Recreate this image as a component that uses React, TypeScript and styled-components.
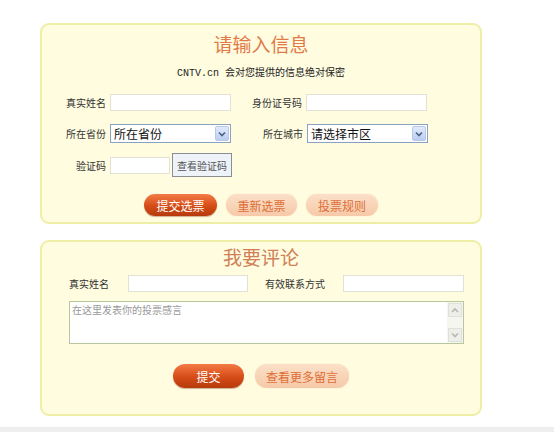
import React from 'react';
import styled, { createGlobalStyle } from 'styled-components';

const GlobalStyle = createGlobalStyle`
  body {
    margin: 0;
    background: #fff;
    font-family: "Liberation Sans", "Noto Sans CJK SC", sans-serif;
  }
`;

const Page = styled.div`
  width: 554px;
  height: 432px;
  overflow: hidden;
  padding-top: 23px;
  box-sizing: border-box;
  display: flex;
  flex-direction: column;
`;

const Panel = styled.div<{ $height: number; $padTop: number }>`
  margin-left: 40px;
  width: 442px;
  height: ${(p) => p.$height}px;
  flex-shrink: 0;
  box-sizing: border-box;
  padding-top: ${(p) => p.$padTop}px;
  border: 2px solid #eeeea6;
  border-radius: 9px;
  background: #fffce0;
  display: flex;
  flex-direction: column;
  & + & {
    margin-top: 16px;
  }
`;

const Title = styled.div<{ $color: string }>`
  text-align: center;
  font-size: 19px;
  line-height: 24px;
  color: ${(p) => p.$color};
  font-family: "Noto Sans CJK SC", sans-serif;
`;

const Note = styled.div`
  margin-top: 10px;
  text-align: center;
  font-size: 10px;
  line-height: 16px;
  color: #222;
  font-family: "Liberation Mono", "Noto Sans CJK SC", monospace;
`;

const FormRow = styled.div<{ $top: number }>`
  display: flex;
  align-items: center;
  margin-top: ${(p) => p.$top}px;
`;

const Label = styled.div<{ $width: number; $align?: string }>`
  width: ${(p) => p.$width}px;
  flex-shrink: 0;
  text-align: ${(p) => p.$align || 'right'};
  padding-right: 4px;
  box-sizing: border-box;
  font-size: 10px;
  color: #333;
  font-family: "Noto Sans CJK SC", sans-serif;
`;

const TextInput = styled.div<{ $width: number }>`
  width: ${(p) => p.$width}px;
  height: 17px;
  box-sizing: border-box;
  border: 1px solid #e2e2d4;
  background: #fff;
  flex-shrink: 0;
`;

const SelectBox = styled.div`
  width: 121px;
  height: 19px;
  box-sizing: border-box;
  border: 1px solid #8aa2c2;
  background: #fff;
  display: flex;
  align-items: center;
  justify-content: space-between;
  padding-left: 3px;
  font-size: 12px;
  color: #111;
  font-family: "Noto Sans CJK SC", sans-serif;
  flex-shrink: 0;
`;

const SelectArrow = styled.div`
  width: 14px;
  height: 15px;
  margin-right: 1px;
  border-radius: 2px;
  background: linear-gradient(#e2ebfb, #b9cdf1);
  border: 1px solid #b8c8e6;
  box-sizing: border-box;
  display: flex;
  align-items: center;
  justify-content: center;
`;

const Spacer = styled.div<{ $width: number }>`
  width: ${(p) => p.$width}px;
  flex-shrink: 0;
`;

const CodeButton = styled.div`
  width: 60px;
  height: 24px;
  margin-left: 2px;
  box-sizing: border-box;
  border: 1px solid #8a8f96;
  background: #eef3fa;
  font-size: 10px;
  color: #555;
  display: flex;
  align-items: center;
  justify-content: center;
  font-family: "Noto Sans CJK SC", sans-serif;
`;

const ButtonRow = styled.div<{ $top: number; $gap: number }>`
  display: flex;
  justify-content: center;
  gap: ${(p) => p.$gap}px;
  margin-top: ${(p) => p.$top}px;
`;

const PillButton = styled.div<{ $primary?: boolean; $width: number; $height: number }>`
  width: ${(p) => p.$width}px;
  height: ${(p) => p.$height}px;
  border-radius: ${(p) => p.$height / 2}px;
  display: flex;
  align-items: center;
  justify-content: center;
  font-size: 12px;
  font-family: "Noto Sans CJK SC", sans-serif;
  color: ${(p) => (p.$primary ? '#fff' : '#de6e38')};
  background: ${(p) =>
    p.$primary
      ? 'linear-gradient(#f47b45, #d54c17 55%, #b63a0c)'
      : 'linear-gradient(#fbe0c8, #f6c9a8)'};
  box-shadow: ${(p) =>
    p.$primary ? '0 1px 1px rgba(120,40,0,0.35)' : '0 0 1px rgba(220,150,110,0.6)'};
`;

const CommentArea = styled.div`
  margin: 9px 0 0 27px;
  width: 395px;
  height: 43px;
  box-sizing: border-box;
  border: 1px solid #b9c79c;
  background: #fff;
  display: flex;
`;

const Placeholder = styled.div`
  flex: 1;
  padding: 1px 2px;
  font-size: 10px;
  line-height: 13px;
  color: #999;
  font-family: "Noto Sans CJK SC", sans-serif;
`;

const ScrollBar = styled.div`
  width: 16px;
  background: #f6f6f0;
  display: flex;
  flex-direction: column;
  justify-content: space-between;
  align-items: center;
`;

const ScrollBtn = styled.div`
  width: 14px;
  height: 14px;
  margin: 1px 0;
  background: #eeeeea;
  border: 1px solid #e0e0da;
  box-sizing: border-box;
  display: flex;
  align-items: center;
  justify-content: center;
`;

const Footer = styled.div`
  margin-top: 11px;
  height: 10px;
  flex-shrink: 0;
  background: #eeeeee;
`;

const Chevron = ({ up, color }: { up?: boolean; color: string }) => (
  <svg width="8" height="6" viewBox="0 0 8 6">
    <path
      d={up ? 'M1 5 L4 2 L7 5' : 'M1 1.5 L4 4.5 L7 1.5'}
      fill="none"
      stroke={color}
      strokeWidth="1.6"
    />
  </svg>
);

function Select({ text }: { text: string }) {
  return (
    <SelectBox>
      {text}
      <SelectArrow>
        <Chevron color="#4d6185" />
      </SelectArrow>
    </SelectBox>
  );
}

export default function App() {
  return (
    <Page>
      <GlobalStyle />
      <Panel $height={201} $padTop={7}>
        <Title $color="#e27a48">请输入信息</Title>
        <Note>CNTV.cn 会对您提供的信息绝对保密</Note>
        <FormRow $top={12}>
          <Label $width={68}>真实姓名</Label>
          <TextInput $width={121} />
          <Label $width={75}>身份证号码</Label>
          <TextInput $width={121} />
        </FormRow>
        <FormRow $top={13}>
          <Label $width={68}>所在省份</Label>
          <Select text="所在省份" />
          <Label $width={76}>所在城市</Label>
          <Select text="请选择市区" />
        </FormRow>
        <FormRow $top={10}>
          <Label $width={68}>验证码</Label>
          <TextInput $width={60} />
          <CodeButton>查看验证码</CodeButton>
        </FormRow>
        <ButtonRow $top={17} $gap={9}>
          <PillButton $primary $width={73} $height={22}>提交选票</PillButton>
          <PillButton $width={71} $height={22}>重新选票</PillButton>
          <PillButton $width={72} $height={22}>投票规则</PillButton>
        </ButtonRow>
      </Panel>
      <Panel $height={176} $padTop={3}>
        <Title $color="#cf8055">我要评论</Title>
        <FormRow $top={6}>
          <Spacer $width={27} />
          <Label $width={59} $align="left">真实姓名</Label>
          <TextInput $width={120} />
          <Spacer $width={17} />
          <Label $width={78} $align="left">有效联系方式</Label>
          <TextInput $width={121} />
        </FormRow>
        <CommentArea>
          <Placeholder>在这里发表你的投票感言</Placeholder>
          <ScrollBar>
            <ScrollBtn>
              <Chevron up color="#b8b8b0" />
            </ScrollBtn>
            <ScrollBtn>
              <Chevron color="#b8b8b0" />
            </ScrollBtn>
          </ScrollBar>
        </CommentArea>
        <ButtonRow $top={20} $gap={11}>
          <PillButton $primary $width={71} $height={24}>提交</PillButton>
          <PillButton $width={94} $height={24}>查看更多留言</PillButton>
        </ButtonRow>
      </Panel>
      <Footer />
    </Page>
  );
}
